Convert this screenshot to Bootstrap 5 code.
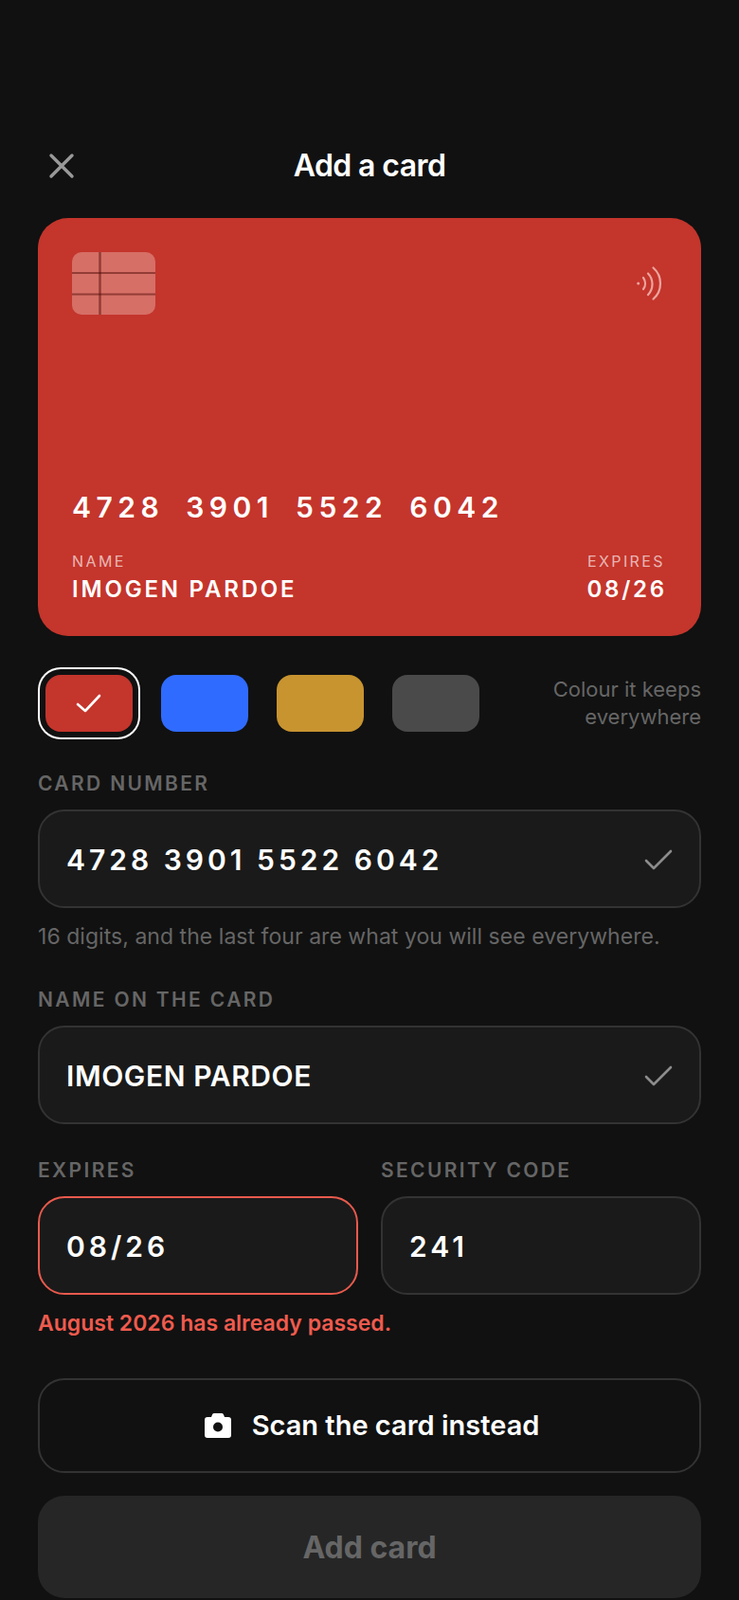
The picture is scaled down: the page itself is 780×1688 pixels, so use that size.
<!DOCTYPE html>
<html lang="en">
<head>
<meta charset="utf-8">
<title>Add a card</title>
<link href="https://cdn.jsdelivr.net/npm/bootstrap@5.3.0/dist/css/bootstrap.min.css" rel="stylesheet">
<style>
html,body{height:100%;}
body{background:#111;font-family:Inter,"Liberation Sans",sans-serif;color:#fff;overflow:hidden;}
.screen{width:780px;height:1688px;padding:150px 40px 0;}
.top-bar{height:50px;position:relative;display:flex;align-items:center;justify-content:center;}
.top-title{font-size:32px;font-weight:600;letter-spacing:-.6px;line-height:50px;margin:0;}
.close-x{position:absolute;left:10px;top:10px;width:30px;height:30px;background:none;border:0;padding:0;line-height:0;}
.pay-card{margin-top:30px;height:441px;background:#c4352c;border-radius:32px;padding:36px 36px 33px 36px;display:flex;flex-direction:column;}
.chip-row{display:flex;justify-content:space-between;align-items:flex-start;}
.nfc{margin:14px 4px 0 0;}
.pay-num{margin-top:auto;font-size:30px;font-weight:600;letter-spacing:5.5px;word-spacing:10px;line-height:36px;}
.pay-foot{display:flex;justify-content:space-between;margin-top:29px;}
.foot-lab{font-size:16px;letter-spacing:2.4px;line-height:20px;margin-bottom:4px;color:rgba(255,255,255,.65);}
.foot-lab.end-lab{margin-right:2px;}
.foot-val{font-size:24px;font-weight:600;letter-spacing:2.8px;line-height:32px;}
.swatch-row{margin-top:41px;display:flex;align-items:center;gap:30px;padding-left:8px;}
.swatch{width:92px;height:60px;border-radius:16px;border:0;padding:0;display:flex;align-items:center;justify-content:center;}
.swatch.on{box-shadow:0 0 0 6px #111,0 0 0 8px #fff;}
.swatch-note{margin-left:auto;text-align:right;font-size:22px;line-height:29px;color:#666;width:190px;}
.block-a{margin-top:41px;}
.block-b{margin-top:38px;}
.block-c{margin-top:35px;}
.fld-label{display:block;font-size:21px;font-weight:600;letter-spacing:2.36px;color:#666;line-height:28px;margin:0 0 13px;}
.fld{height:104px;background:#1a1a1a;border:2px solid #333;border-radius:28px;padding:2px 28px 0;display:flex;align-items:center;justify-content:space-between;}
.fld.bad{border-color:#e85a4d;}
.fld-val{font-size:30px;font-weight:600;letter-spacing:.6px;}
.fld-val.spaced{letter-spacing:4px;}
.hint{font-size:23px;letter-spacing:.04px;line-height:30px;color:#666;margin:15px 0 0;}
.err{font-size:23px;font-weight:600;line-height:30px;color:#ef5b4e;margin:15px 0 0;}
.scan-btn{margin-top:43px;width:100%;height:100px;background:#111;border:2px solid #333;border-radius:28px;color:#fff;font-size:29px;font-weight:600;display:flex;align-items:center;justify-content:center;gap:22px;padding:0 0 0 5px;}
.add-btn{margin-top:24px;width:100%;height:108px;background:#262626;border:0;border-radius:28px;color:#666;font-size:32px;font-weight:700;padding-top:2px;}
</style>
</head>
<body>
<div class="screen">
  <div class="top-bar">
    <button class="close-x" aria-label="Close"><svg width="30" height="30" viewBox="0 0 30 30"><path d="M4 4L26 26M26 4L4 26" stroke="#999" stroke-width="3.400" stroke-linecap="round" fill="none"/></svg></button>
    <h1 class="top-title">Add a card</h1>
  </div>

  <div class="pay-card">
    <div class="chip-row">
      <svg width="88" height="66" viewBox="0 0 88 66"><rect width="88" height="66" rx="10" fill="#d66f66"/><path d="M0 22H88M0 44.500H88" stroke="#500a05" stroke-opacity=".5" stroke-width="2"/><path d="M29.500 0V66" stroke="#500a05" stroke-opacity=".5" stroke-width="2.500"/></svg>
      <svg class="nfc" width="30" height="38" viewBox="0 0 30 38" fill="none" stroke="#eda59f" stroke-width="2.200" stroke-linecap="round"><circle cx="3.700" cy="19" r="1.500" fill="#eda59f" stroke="none"/><path d="M9 13A10 10 0 0 1 9 25"/><path d="M14 8.500A16.300 16.300 0 0 1 14 31"/><path d="M19.500 2.500A21.900 21.900 0 0 1 19.500 35.500"/></svg>
    </div>
    <div class="pay-num">4728 3901 5522 6042</div>
    <div class="pay-foot">
      <div><div class="foot-lab">NAME</div><div class="foot-val">IMOGEN PARDOE</div></div>
      <div class="text-end"><div class="foot-lab end-lab">EXPIRES</div><div class="foot-val">08/26</div></div>
    </div>
  </div>

  <div class="swatch-row">
    <button class="swatch on" style="background:#c4352c" aria-label="Red"><svg width="28" height="22" viewBox="0 0 28 22" fill="none"><path d="M2 12l8 7L25 3" stroke="#fff" stroke-width="2.600" stroke-linecap="round" stroke-linejoin="round"/></svg></button>
    <button class="swatch" style="background:#2f6bff" aria-label="Blue"></button>
    <button class="swatch" style="background:#c89430" aria-label="Gold"></button>
    <button class="swatch" style="background:#4a4a4a" aria-label="Grey"></button>
    <div class="swatch-note">Colour it keeps everywhere</div>
  </div>

  <div class="block-a">
  <label class="fld-label">CARD NUMBER</label>
  <div class="fld"><span class="fld-val spaced">4728 3901 5522 6042</span><svg width="30" height="24" viewBox="0 0 30 24" fill="none"><path d="M2 13l8 8L28 3" stroke="#8c8c8c" stroke-width="2.600" stroke-linecap="round" stroke-linejoin="round"/></svg></div>
  <p class="hint">16 digits, and the last four are what you will see everywhere.</p>
  </div>

  <div class="block-b">
  <label class="fld-label">NAME ON THE CARD</label>
  <div class="fld"><span class="fld-val">IMOGEN PARDOE</span><svg width="30" height="24" viewBox="0 0 30 24" fill="none"><path d="M2 13l8 8L28 3" stroke="#8c8c8c" stroke-width="2.600" stroke-linecap="round" stroke-linejoin="round"/></svg></div>
  </div>

  <div class="row gx-4 block-c">
    <div class="col-6">
      <label class="fld-label">EXPIRES</label>
      <div class="fld bad"><span class="fld-val spaced">08/26</span></div>
    </div>
    <div class="col-6">
      <label class="fld-label">SECURITY CODE</label>
      <div class="fld"><span class="fld-val spaced">241</span></div>
    </div>
  </div>
  <p class="err">August 2026 has already passed.</p>

  <button class="scan-btn"><svg width="28" height="26" viewBox="0 0 28 26"><path fill-rule="evenodd" fill="#fff" d="M10 0h8a2 2 0 0 1 2 1.500L21 4h4a3 3 0 0 1 3 3v16a3 3 0 0 1-3 3H3a3 3 0 0 1-3-3V7a3 3 0 0 1 3-3h4l1-2.500A2 2 0 0 1 10 0zm4 9.500a5 5 0 1 0 0 10 5 5 0 0 0 0-10z"/></svg>Scan the card instead</button>
  <button class="add-btn" disabled>Add card</button>
</div>
<script src="https://cdn.jsdelivr.net/npm/bootstrap@5.3.0/dist/js/bootstrap.bundle.min.js"></script>
</body>
</html>
